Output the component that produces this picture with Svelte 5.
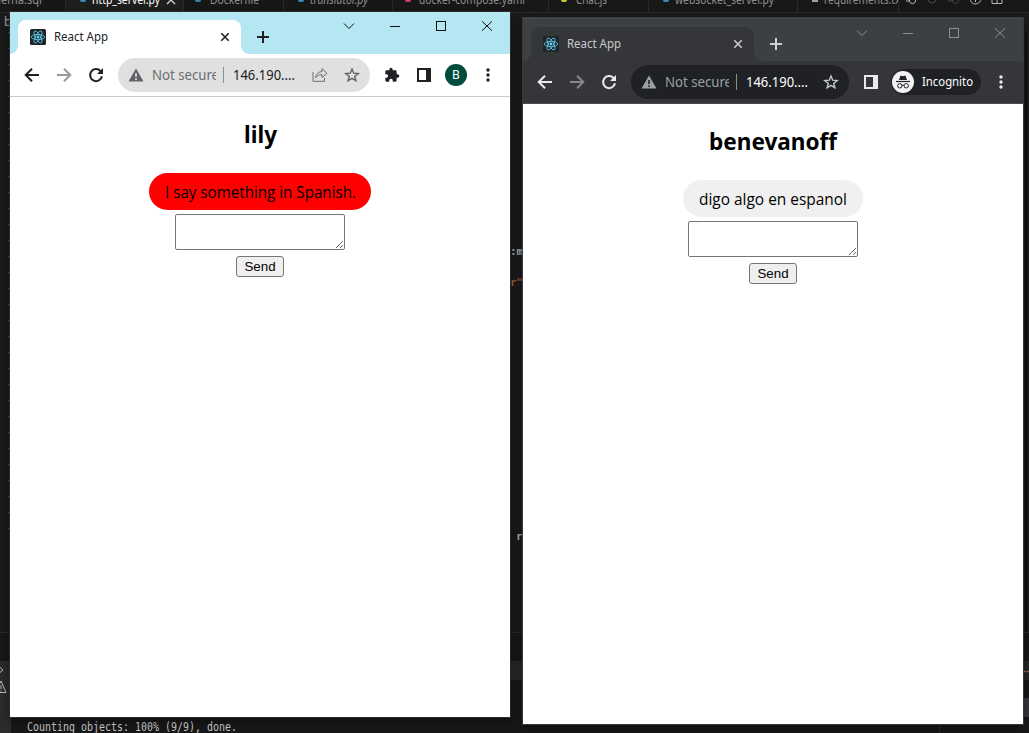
<script>
  const tabs = [
    { w: 66, pad: -6, tw: 48, name: 'hema.sql', color: '', mark: '' },
    { w: 118, pad: 26, tw: 68, name: 'http_server.py', color: '#3b8ab8', mark: 'dot', at: 14, active: true },
    { w: 100, pad: 26, tw: 49, name: 'Dockerfile', color: '#2f86a8', mark: 'dot', at: 11 },
    { w: 109, pad: 26, tw: 58, name: 'translator.py', color: '#3b8ab8', mark: 'dot', at: 14, italic: true },
    { w: 156, pad: 26, tw: 106, name: 'docker-compose.yaml', color: '#d8415f', mark: 'dot', at: 12 },
    { w: 100, pad: 27, tw: 31, name: 'Chat.js', color: '#cbcb41', mark: 'dot', at: 12 },
    { w: 149, pad: 26, tw: 99, name: 'websocket_server.py', color: '#3b8ab8', mark: 'dot', at: 14 },
    { w: 101, pad: 26, tw: 80, name: 'requirements.txt', color: '#a0a0a0', mark: 'line', at: 14 }
  ];
  const windows = [
    { kind: 'light', user: 'lily', message: 'I say something in Spanish.', userW: 33, msgW: 191 },
    { kind: 'dark', user: 'benevanoff', message: 'digo algo en espanol', userW: 128, msgW: 148 }
  ];
  const lines = Array.from({ length: 32 }, (_, i) => i);
</script>

{#snippet fit(text, width, size, h, base)}
  <svg class="fit" {width} height={h}><text x="0" y={base} font-size={size} textLength={width} lengthAdjust="spacingAndGlyphs">{text}</text></svg>
{/snippet}

<div class="desk">
  <div class="tabs">
    {#each tabs as t}
      <div class="etab" class:active={t.active} class:italic={t.italic} style="width:{t.w}px;padding-left:{Math.max(t.pad, 0)}px">
        {#if t.mark}<i class={t.mark} style="background:{t.color};margin-left:{t.at - t.pad}px;margin-right:{t.pad - t.at - 6}px"></i>{/if}
        {@render fit(t.name, t.tw, 12, 12, 3.5)}
        {#if t.active}<svg class="ex" width="10" height="12"><path d="M1 -4 9 4M9 -4 1 4" /></svg>{/if}
      </div>
    {/each}
    <svg class="actions" width="130" height="12" viewBox="899 0 130 12">
      <path d="M906 1h4M910 -1a3 3 0 1 0 5 0M970 -1.500a5.500 5.500 0 1 0 11 0M975.500 -1v3M992 -3v6.500h10v-6.500M997 -3v6" stroke="#b8b8b8" />
      <path d="M928 -1a4 4 0 0 0 8 0M948 1h4M953 -1a3 3 0 1 0 5 0" stroke="#484848" />
    </svg>
  </div>
  <div class="code">
    <div class="gutter">
      <span class="crumb">b</span>
      {#each lines as n}<i class="num"></i>{/each}
    </div>
    <div class="peek"><span class="a">:m</span><span class="b">r"</span><span class="c">r</span></div>
    <div class="minimap"></div>
  </div>
  <div class="panel">
    <div class="phead"></div>
    <div class="pmid"><span>··</span></div>
    <div class="prow"></div>
    <div class="prow lit"></div>
    <div class="term"><span>{@render fit('Counting objects: 100% (9/9), done.', 210, 11.5, 13, 11)}</span><i></i></div>
    <svg class="side" width="11" height="73"><path d="M-3 4 3 9 -3 14M-5 31.500 1 20 6 31.500zM1 24v4M1 29.500v1" /></svg>
  </div>

  {#each windows as w}
    <section class="win {w.kind}">
      <header class="strip">
        <div class="tab">
          <svg class="logo" width="16" height="16" viewBox="0 0 16 16"><rect width="16" height="16" rx="1.500" fill="#20232a" /><g fill="none" stroke="#61dafb" stroke-width=".75"><ellipse cx="8" cy="8" rx="6.700" ry="2.600" /><ellipse cx="8" cy="8" rx="6.700" ry="2.600" transform="rotate(60 8 8)" /><ellipse cx="8" cy="8" rx="6.700" ry="2.600" transform="rotate(120 8 8)" /></g><circle cx="8" cy="8" r="1.400" fill="#61dafb" /></svg>
          <span class="title">{@render fit('React App', 54, 12, 16, 12)}</span>
          <svg class="x" width="10" height="10"><path d="M1.300 1.300 8.700 8.700M8.700 1.300 1.300 8.700" /></svg>
        </div>
        <svg class="plus" width="12" height="12"><path d="M6 0V12M0 6H12" /></svg>
        <div class="controls">
          <svg width="46" height="28"><path d="M18 11.500 23 16.500 28 11.500" /></svg>
          <svg width="46" height="28"><path d="M18 14.500H28" shape-rendering="crispEdges" /></svg>
          <svg width="46" height="28"><rect x="18.500" y="9.500" width="9" height="9" shape-rendering="crispEdges" /></svg>
          <svg width="46" height="28"><path d="M18 9.300 28 18.700M28 9.300 18 18.700" /></svg>
        </div>
      </header>
      <div class="bar">
        <svg class="nav" width="32" height="32"><path d="M23 16H10M16 9.700 9.700 16 16 22.300" /></svg>
        <svg class="nav dim" width="32" height="32"><path d="M9 16H22M16 9.700 22.300 16 16 22.300" /></svg>
        <svg class="nav" width="32" height="32"><path d="M20.500 12A6 6 0 1 0 22 17.300" /><path class="solid" d="M23 9V15H17z" /></svg>
        <div class="omni">
          <svg class="warn" width="16" height="16"><path fill-rule="evenodd" d="M8 1.500 15.500 14.500H.5zM7.200 6V10H8.800V6zM7.200 11.300V12.900H8.800V11.300z" /></svg>
          <span class="secure">{@render fit('Not secure', 67, 14, 20, 15)}</span>
          <i class="rule"></i>
          <span class="url">{@render fit('146.190....', 62, 14, 20, 15)}</span>
          {#if w.kind === 'light'}
            <svg class="share" width="16" height="16"><path d="M1 5V14.300H12.500V11M3.500 11C4 7 6.500 4.700 10 4.500V1.700L15 6.300 10 10.500V7.700C7 7.600 5 8.500 3.500 11z" /></svg>
          {/if}
          <svg class="star" width="16" height="16"><path d="M8 2 9.700 6.200 14.200 6.500 10.700 9.400 11.900 13.800 8 11.400 4.100 13.800 5.300 9.400 1.800 6.500 6.300 6.200z" /></svg>
        </div>
        {#if w.kind === 'light'}
          <svg class="puzzle" width="16" height="16" viewBox="0 0 24 24"><path d="M20.500 11H19V7c0-1.100-.9-2-2-2h-4V3.500a2.500 2.500 0 0 0-5 0V5H4c-1.100 0-2 .9-2 2v3.800h1.500a2.700 2.700 0 0 1 0 5.400H2V20c0 1.100.9 2 2 2h3.800v-1.500a2.700 2.700 0 0 1 5.400 0V22H17c1.100 0 2-.9 2-2v-4h1.500a2.500 2.500 0 0 0 0-5z" /></svg>
        {/if}
        <svg class="sidep" width="14" height="14"><path fill-rule="evenodd" d="M0 0H14V14H0zM2 2V12H9V2z" /></svg>
        {#if w.kind === 'light'}
          <span class="avatar">B</span>
        {:else}
          <span class="incog">
            <svg width="22" height="22"><circle cx="11" cy="11" r="11" fill="#f1f3f4" /><path d="M7 9 8.500 4.600 11 5.200 13.500 4.600 15 9z" fill="#202124" /><path d="M4 10.500H18" stroke="#202124" stroke-width="1.200" /><g fill="none" stroke="#202124"><circle cx="7.800" cy="14.800" r="2.200" /><circle cx="14.200" cy="14.800" r="2.200" /><path d="M10 14.300Q11 13.800 12 14.300" /></g></svg>
            {@render fit('Incognito', 51, 12, 16, 12)}
          </span>
        {/if}
        <svg class="dots" width="4" height="14"><circle cx="2" cy="2" r="1.700" /><circle cx="2" cy="7" r="1.700" /><circle cx="2" cy="12" r="1.700" /></svg>
      </div>
      <main>
        <h2>{@render fit(w.user, w.userW, 24, 32, 24)}</h2>
        <div class="bubble">{@render fit(w.message, w.msgW, 16, 22, 17)}</div>
        <textarea></textarea>
        <button>Send</button>
      </main>
    </section>
  {/each}
</div>

<style>
  :global(body) { margin: 0; overflow: hidden; }
  .desk { position: relative; width: 1029px; height: 733px; overflow: hidden; background: #1c1c1c; font-family: "Noto Sans", "Open Sans", sans-serif; display: flex; flex-direction: column; }
  svg { display: block; flex: none; fill: none; stroke: none; }
  .fit { overflow: visible; }
  .fit text { fill: currentColor; stroke: none; }
  .tabs { height: 12px; flex: none; display: flex; background: #181818; color: #8f8f8f; border-bottom: 1px solid #2b2b2b; overflow: hidden; }
  .etab { box-sizing: border-box; flex: none; height: 12px; border-right: 1px solid #2b2b2b; display: flex; align-items: flex-start; overflow: hidden; }
  .etab:first-child .fit { margin-left: -6px; }
  .etab.active { background: #1f1f1f; color: #fff; }
  .italic { font-style: italic; }
  .dot { width: 6px; height: 2px; border-radius: 0 0 3px 3px; flex: none; }
  .line { width: 6px; height: 2px; flex: none; }
  .ex { margin-left: 6px; stroke: #ddd; stroke-width: 1.3; }
  .code { flex: 1; display: flex; position: relative; overflow: hidden; }
  .gutter { width: 10px; flex: none; padding-top: 1px; display: flex; flex-direction: column; align-items: flex-end; }
  .crumb { font-size: 12px; line-height: 16px; color: #a9a9a9; height: 18px; width: 6px; }
  .num { width: 2px; height: 1px; margin-bottom: 15px; background: #4d5c70; flex: none; }
  .peek { margin-left: 500px; width: 13px; flex: none; overflow: hidden; font: bold 11px/16px "DejaVu Sans Mono", monospace; display: flex; flex-direction: column; color: #aeb4bb; }
  .peek .a { margin-top: 231px; }
  .peek .b { margin-top: 15px; color: #a8603f; }
  .peek .c { margin: 238px 0 0 6px; }
  .minimap { margin-left: 502px; flex: none; width: 2px; background: #101010; margin-top: 18px; }
  .panel { height: 101px; flex: none; position: relative; background: #181818; border-top: 1px solid #2b2b2b; box-sizing: border-box; display: flex; flex-direction: column; }
  .phead { height: 28px; flex: none; }
  .pmid { height: 19px; flex: none; background: #2a2a2a; display: flex; justify-content: flex-end; color: #d0b090; font-size: 11px; line-height: 19px; }
  .pmid span { width: 6px; overflow: hidden; }
  .prow { height: 18px; flex: none; }
  .prow.lit { height: 19px; background: linear-gradient(90deg, #181818 1020px, #37373d 0); }
  .term { flex: 1; display: flex; padding-left: 11px; color: #ccc; }
  .term span { padding: 3px 0 0 16px; font-family: "DejaVu Sans Mono", monospace; }
  .term i { width: 1px; margin-left: 702px; background: #2b2b2b; }
  .side { position: absolute; left: 0; top: 28px; background: #2c2c2c; stroke: #c0c0c0; }
  .win { position: absolute; display: flex; flex-direction: column; width: 500px; background: #fff; }
  .light { left: 10px; top: 12px; height: 705px; box-shadow: 0 0 0 1px #2b2d2d, 0 3px 12px #0008; color: #202124; }
  .dark { left: 523px; top: 18px; height: 706px; box-shadow: 0 0 0 1px #38393a, 0 3px 12px #0008; color: #e8eaed; }
  .strip { height: 42px; flex: none; display: flex; padding-left: 8px; box-sizing: border-box; background: #b4e7f2; }
  .dark .strip { height: 43px; border-top: 1px solid #4a4c4e; background: #3c4043; }
  .tab { --c: #fff; position: relative; margin-top: 8px; width: 223px; height: 34px; box-sizing: border-box; padding: 0 11px 0 12px; border-radius: 8px 8px 0 0; background: var(--c); display: flex; align-items: center; }
  .dark .tab { --c: #35363a; }
  .tab::before, .tab::after { content: ""; position: absolute; bottom: 0; width: 8px; height: 8px; }
  .tab::before { left: -8px; background: radial-gradient(circle at 0 0, transparent 7.500px, var(--c) 8px); }
  .tab::after { right: -8px; background: radial-gradient(circle at 100% 0, transparent 7.500px, var(--c) 8px); }
  .title { margin-left: 8px; flex: 1; }
  .dark .title, .dark .x { color: #c8cacd; }
  .x { stroke: currentColor; stroke-width: 1.600; }
  .plus { margin: 19px 0 0 16px; stroke: currentColor; stroke-width: 2; }
  .dark .plus { stroke: #cfd1d4; }
  .controls { margin-left: auto; display: flex; }
  .controls svg { stroke: #111; stroke-width: 1; }
  .dark .controls svg { stroke: #8d9092; }
  .bar { height: 42px; flex: none; display: flex; align-items: center; box-sizing: content-box; padding-left: 6px; border-bottom: 1px solid #ccc; }
  .dark .bar { background: #35363a; border-color: #4b4c50; }
  .nav { stroke: currentColor; stroke-width: 2; }
  .solid { fill: currentColor; stroke: none; }
  .dim { opacity: .45; }
  .omni { margin-left: 6px; width: 252px; height: 34px; border-radius: 17px; background: #e0e0e0; display: flex; align-items: center; box-sizing: border-box; padding: 0 10px; }
  .dark .omni { width: 218px; background: #202124; }
  .warn { fill: #5f6368; }
  .dark .warn { fill: #9aa0a6; }
  .secure { width: 64px; margin-left: 8px; overflow: hidden; color: #6b6e72; }
  .dark .secure { color: #9aa0a6; }
  .rule { width: 1px; height: 16px; margin: 0 9px 0 7px; background: #8a8d91; }
  .dark .url { color: #fff; }
  .share { margin-left: auto; margin-right: 16px; stroke: #6b6e72; }
  .dark .star { margin-left: auto; }
  .star { stroke: #5f6368; stroke-width: 1.400; }
  .dark .star { stroke: #c4c7ca; }
  .puzzle { margin-left: 14px; fill: currentColor; }
  .sidep { margin-left: 17px; fill: currentColor; }
  .dark .sidep { margin-left: 15px; }
  .avatar { margin-left: 14px; width: 22px; height: 22px; border-radius: 50%; background: #004d40; color: #fff; font-size: 12px; line-height: 22px; text-align: center; }
  .incog { margin-left: 13px; width: 90px; height: 26px; border-radius: 13px; background: #202124; display: flex; align-items: center; gap: 8px; padding-left: 1px; box-sizing: border-box; color: #fff; }
  .dots { margin-left: 19px; fill: currentColor; }
  .dark .dots { margin-left: 18px; }
  main { display: flex; flex-direction: column; align-items: center; color: #000; }
  h2 { margin: 22px 0 22px; height: 32px; font-weight: 700; }
  .bubble { height: 37px; box-sizing: border-box; padding: 8px 15.500px; border-radius: 18.500px; background: red; font-family: "Open Sans", sans-serif; }
  .dark .bubble { background: #f0f0f0; padding: 8px 16px; }
  textarea { margin: 4px 0 6px; width: 170px; height: 36px; box-sizing: border-box; border: 1px solid #767676; border-radius: 2px; }
  button { width: 48px; height: 21px; padding: 0; border: 1px solid #767676; border-radius: 3px; background: #efefef; font: 13.333px "Liberation Sans", sans-serif; color: #000; }
</style>
